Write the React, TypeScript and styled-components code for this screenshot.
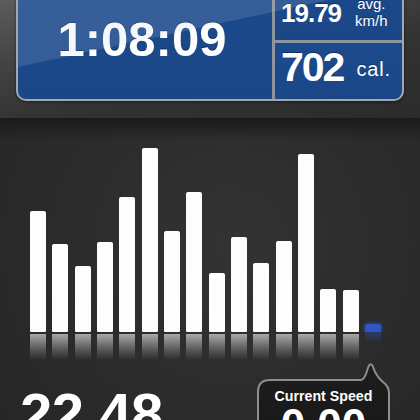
import React from "react";
import styled, { createGlobalStyle } from "styled-components";

const Global = createGlobalStyle`
  html, body { margin: 0; padding: 0; background: #1e1e1e; overflow: hidden; }
  * { box-sizing: border-box; }
`;

const FONT = `"Liberation Sans", Arial, Helvetica, sans-serif`;

const Screen = styled.div`
  width: 420px;
  height: 420px;
  overflow: hidden;
  display: flex;
  flex-direction: column;
  font-family: ${FONT};
  color: #fff;
`;

const Header = styled.div`
  height: 118px;
  flex: none;
  display: flex;
  align-items: flex-end;
  padding: 0 16px 17px 16px;
  background: linear-gradient(168deg, #5c5c5c 0%, #444 30%, #333 60%, #2b2b2b 100%);
`;

const Panel = styled.div`
  position: relative;
  width: 100%;
  height: 131px;
  border: 2px solid #a2a8b0;
  border-radius: 10px;
  background: #8d949d;
  display: grid;
  grid-template-columns: 254px 1fr;
  grid-template-rows: 68px 56px;
  gap: 3px;
  overflow: hidden;
  box-shadow: 0 1px 3px rgba(0, 0, 0, 0.5);
  &::after {
    content: "";
    position: absolute;
    inset: 0;
    pointer-events: none;
    background: rgba(190, 205, 230, 0.16);
    clip-path: polygon(0 0, 100% 0, 100% 12px, 0 95px);
  }
`;

const Cell = styled.div`
  background: linear-gradient(180deg, #1c4a8d 0%, #1b4787 100%);
  display: flex;
  text-shadow: 0 -1px 0 rgba(0, 0, 0, 0.35);
`;

const MainCell = styled(Cell)`
  grid-row: 1 / span 2;
  align-items: center;
  justify-content: center;
  padding: 8px 6px 0 0;
`;

const StatCell = styled(Cell)`
  align-items: flex-end;
  padding-left: 6px;
`;

const Time = styled.div`
  font-size: 49px;
  font-weight: 700;
  line-height: 1;
`;

const Value = styled.div<{ $size: number; $bottom: number }>`
  font-size: ${(p) => p.$size}px;
  font-weight: 700;
  line-height: 1;
  letter-spacing: ${(p) => (p.$size > 30 ? -2 : -1)}px;
  margin-bottom: ${(p) => p.$bottom}px;
`;

const Unit = styled.div<{ $size: number; $bottom: number; $left: number }>`
  font-size: ${(p) => p.$size}px;
  line-height: ${(p) => (p.$size < 18 ? "17px" : 1)};
  text-align: center;
  letter-spacing: ${(p) => (p.$size < 18 ? 0 : 0.8)}px;
  margin-left: ${(p) => p.$left}px;
  margin-bottom: ${(p) => p.$bottom}px;
`;

const Body = styled.div`
  flex: 1;
  display: flex;
  flex-direction: column;
  background:
    linear-gradient(180deg, #1a1a1a 0px, rgba(26, 26, 26, 0) 22px),
    radial-gradient(ellipse at 55% 35%, #333 0%, #2c2c2c 45%, #252525 100%);
`;

const Chart = styled.div`
  margin: 22px 0 0 30px;
  width: 351px;
  height: 220px;
  display: grid;
  grid-template-columns: repeat(16, 1fr);
  column-gap: 6.5px;
`;

const Column = styled.div`
  display: flex;
  flex-direction: column;
  justify-content: flex-end;
  height: 220px;
`;

const Bar = styled.div<{ $active?: boolean }>`
  border-radius: 2px 2px 1px 1px;
  background: ${(p) => (p.$active ? "#2f55c8" : "#fdfdfd")};
  box-shadow: ${(p) => (p.$active ? "0 0 4px rgba(60, 100, 230, 0.7)" : "none")};
`;

const Reflection = styled.div<{ $active?: boolean }>`
  margin-top: 2px;
  height: 26px;
  background: ${(p) =>
    p.$active
      ? "linear-gradient(180deg, rgba(50, 85, 200, 0.35) 0px, rgba(50, 85, 200, 0) 8px)"
      : "linear-gradient(180deg, rgba(210, 210, 210, 0.75) 0%, rgba(170, 170, 170, 0.35) 60%, rgba(120, 120, 120, 0) 100%)"};
`;

const Bottom = styled.div`
  display: flex;
  justify-content: space-between;
  align-items: flex-start;
  padding: 1px 29px 0 20px;
`;

const Distance = styled.div`
  margin-top: 24px;
  font-size: 58px;
  font-weight: 700;
  line-height: 1;
  letter-spacing: -0.5px;
`;

const Bubble = styled.div`
  position: relative;
  width: 135px;
  height: 120px;
  padding-top: 28px;
  display: flex;
  flex-direction: column;
  align-items: center;
`;

const BubbleShape = styled.svg`
  position: absolute;
  inset: 0;
  z-index: 0;
`;

const BubbleLabel = styled.div`
  position: relative;
  font-size: 14.2px;
  font-weight: 700;
  line-height: 14px;
`;

const BubbleValue = styled.div`
  position: relative;
  margin-top: 4px;
  font-size: 44px;
  font-weight: 700;
  line-height: 0.8;
`;

const bars = [121, 88, 66, 90, 135, 184, 101, 140, 59, 95, 69, 91, 178, 43, 42];

export default function App() {
  return (
    <Screen>
      <Global />
      <Header>
        <Panel>
          <MainCell>
            <Time>1:08:09</Time>
          </MainCell>
          <StatCell>
            <Value $size={26} $bottom={14}>19.79</Value>
            <Unit $size={15} $bottom={11} $left={14}>
              avg.
              <br />
              km/h
            </Unit>
          </StatCell>
          <StatCell>
            <Value $size={41} $bottom={11}>702</Value>
            <Unit $size={20} $bottom={20} $left={13}>cal.</Unit>
          </StatCell>
        </Panel>
      </Header>
      <Body>
        <Chart>
          {bars.map((h, i) => (
            <Column key={i}>
              <Bar style={{ height: h }} />
              <Reflection />
            </Column>
          ))}
          <Column>
            <Bar $active style={{ height: 8 }} />
            <Reflection $active />
          </Column>
        </Chart>
        <Bottom>
          <Distance>22.48</Distance>
          <Bubble>
            <BubbleShape width="135" height="120" viewBox="0 0 135 120">
              <defs>
                <linearGradient id="bub" x1="0" y1="0" x2="0" y2="1">
                  <stop offset="0" stopColor="#1d1d1d" />
                  <stop offset="1" stopColor="#151515" />
                </linearGradient>
              </defs>
              <path
                d="M2 31 Q2 19 14 19 L105 19 C108 19 110 14 112 7 Q114.5 0 117 6 C119 12 122 17 127 21 C131 24 133 27 133 32 L133 130 L2 130 Z"
                fill="url(#bub)"
                stroke="#8e8e8e"
                strokeWidth="2"
              />
            </BubbleShape>
            <BubbleLabel>Current Speed</BubbleLabel>
            <BubbleValue>0.00</BubbleValue>
          </Bubble>
        </Bottom>
      </Body>
    </Screen>
  );
}
